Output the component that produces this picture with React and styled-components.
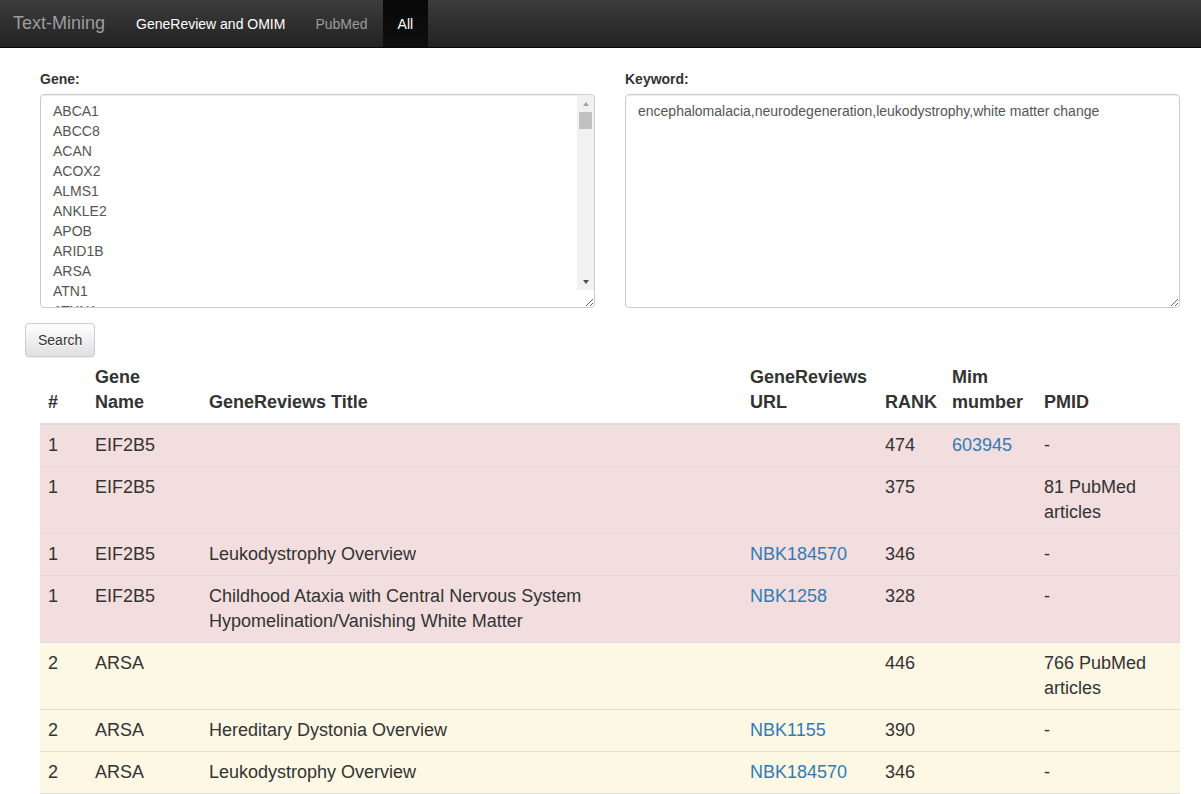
import React from "react";
import styled, { createGlobalStyle } from "styled-components";

const GlobalStyle = createGlobalStyle`
    html, body {
        margin: 0;
        padding: 0;
        background: #fff;
        font-family: "Liberation Sans", Arial, sans-serif;
        color: #333;
    }
    * {
        box-sizing: border-box;
    }
`;

const Navbar = styled.nav`
    height: 48px;
    display: flex;
    align-items: stretch;
    background: linear-gradient(to bottom, #3c3c3c 0%, #222 100%);
    border-bottom: 1px solid #080808;
`;

const Brand = styled.a`
    display: flex;
    align-items: center;
    padding: 0 16px 0 13px;
    font-size: 18px;
    color: #9d9d9d;
    text-decoration: none;
`;

const NavLink = styled.a`
    display: flex;
    align-items: center;
    padding: 0 15px;
    font-size: 14px;
    text-decoration: none;
    color: ${(p) => (p.$bright || p.$active ? "#fff" : "#9d9d9d")};
    background: ${(p) => (p.$active ? "linear-gradient(to bottom, #080808 0%, #0f0f0f 100%)" : "transparent")};
`;

const Page = styled.main`
    padding: 22px 6px 0 25px;
`;

const FormRow = styled.div`
    display: grid;
    grid-template-columns: 1fr 1fr;
    gap: 30px;
    padding: 0 15px;
`;

const FormGroup = styled.div`
    display: flex;
    flex-direction: column;
`;

const Label = styled.label`
    font-size: 14px;
    line-height: 18px;
    font-weight: bold;
    margin-bottom: 6px;
`;

const FieldBox = styled.div`
    position: relative;
`;

const TextArea = styled.textarea`
    display: block;
    height: 214px;
    width: 100%;
    padding: 6px ${(p) => (p.$scroll ? "30px" : "12px")} 6px 12px;
    font-family: "Liberation Sans", Arial, sans-serif;
    font-size: 14px;
    line-height: 20px;
    color: #555;
    border: 1px solid #ccc;
    border-radius: 4px;
    box-shadow: inset 0 1px 1px rgba(0, 0, 0, 0.075);
    overflow: hidden;
    resize: vertical;
    outline: none;
`;

/* drawn scrollbar, since the headless browser hides native ones */
const ScrollTrack = styled.div`
    position: absolute;
    top: 1px;
    right: 1px;
    bottom: 18px;
    width: 17px;
    background: #f1f1f1;
    border-top-right-radius: 3px;
    display: flex;
    flex-direction: column;
    align-items: center;
    pointer-events: none;
`;

const ScrollArrow = styled.div`
    height: 17px;
    width: 17px;
    display: flex;
    align-items: center;
    justify-content: center;

    &::before {
        content: "";
        width: 0;
        height: 0;
        border-left: 3.5px solid transparent;
        border-right: 3.5px solid transparent;
        ${(p) =>
            p.$down
                ? "border-top: 4px solid #505050;"
                : "border-bottom: 4px solid #a3a3a3;"}
    }
`;

const ScrollThumb = styled.div`
    width: 13px;
    height: 17px;
    background: #c1c1c1;
`;

const ScrollSpacer = styled.div`
    flex: 1;
`;

const SearchButton = styled.button`
    margin-top: 15px;
    height: 34px;
    padding: 0 12px;
    font-family: "Liberation Sans", Arial, sans-serif;
    font-size: 14px;
    color: #333;
    background: linear-gradient(to bottom, #fff 0%, #e0e0e0 100%);
    border: 1px solid #ccc;
    border-radius: 4px;
    box-shadow: inset 0 1px 0 rgba(255, 255, 255, 0.15), 0 1px 1px rgba(0, 0, 0, 0.075);
    text-shadow: 0 1px 0 #fff;
    cursor: pointer;
`;

const TableWrap = styled.div`
    padding: 0 15px;
`;

const Table = styled.table`
    width: 100%;
    border-collapse: collapse;
    table-layout: fixed;
    font-size: 18px;
    line-height: 25px;
`;

const Th = styled.th`
    text-align: left;
    vertical-align: bottom;
    padding: 8px;
    font-weight: bold;
    border-bottom: 2px solid #ddd;
`;

const Row = styled.tr`
    background: ${(p) => (p.$tone === "danger" ? "#f2dede" : "#fcf8e3")};
`;

const Td = styled.td`
    vertical-align: top;
    padding: 8px;
    border-top: 1px solid #ddd;
    border-bottom: 1px solid #ddd;
`;

const Link = styled.a`
    color: #337ab7;
    text-decoration: none;
`;

const genes = [
    "ABCA1", "ABCC8", "ACAN", "ACOX2", "ALMS1", "ANKLE2", "APOB", "ARID1B", "ARSA", "ATN1",
    "ATXN1", "ATXN2", "ATXN3", "ATXN7", "BCKDHA", "BCKDHB", "BRAF", "CACNA1A", "CLCN2", "COL4A1",
    "COL4A2", "CSF1R", "CTSA", "CYP27A1", "DARS", "DARS2", "DNM1L", "EARS2", "EIF2B1", "EIF2B2",
    "EIF2B3", "EIF2B4", "EIF2B5", "ERCC6", "ERCC8", "FAM126A", "FOLR1", "FUCA1", "GALC", "GFAP",
];

const columns = [47, 114, 541, 135, 67, 92, 144];

const rows = [
    { n: 1, gene: "EIF2B5", title: "", url: "", rank: 474, mim: "603945", pmid: "-", tone: "danger" },
    { n: 1, gene: "EIF2B5", title: "", url: "", rank: 375, mim: "", pmid: "81 PubMed articles", tone: "danger" },
    { n: 1, gene: "EIF2B5", title: "Leukodystrophy Overview", url: "NBK184570", rank: 346, mim: "", pmid: "-", tone: "danger" },
    { n: 1, gene: "EIF2B5", title: "Childhood Ataxia with Central Nervous System Hypomelination/Vanishing White Matter", url: "NBK1258", rank: 328, mim: "", pmid: "-", tone: "danger" },
    { n: 2, gene: "ARSA", title: "", url: "", rank: 446, mim: "", pmid: "766 PubMed articles", tone: "warning" },
    { n: 2, gene: "ARSA", title: "Hereditary Dystonia Overview", url: "NBK1155", rank: 390, mim: "", pmid: "-", tone: "warning" },
    { n: 2, gene: "ARSA", title: "Leukodystrophy Overview", url: "NBK184570", rank: 346, mim: "", pmid: "-", tone: "warning" },
];

export default function App() {
    return (
        <>
            <GlobalStyle />
            <Navbar>
                <Brand href="#">Text-Mining</Brand>
                <NavLink href="#" $bright>GeneReview and OMIM</NavLink>
                <NavLink href="#">PubMed</NavLink>
                <NavLink href="#" $active>All</NavLink>
            </Navbar>
            <Page>
                <FormRow>
                    <FormGroup>
                        <Label htmlFor="gene">Gene:</Label>
                        <FieldBox>
                            <TextArea id="gene" $scroll defaultValue={genes.join("\n")} />
                            <ScrollTrack>
                                <ScrollArrow />
                                <ScrollThumb />
                                <ScrollSpacer />
                                <ScrollArrow $down />
                            </ScrollTrack>
                        </FieldBox>
                    </FormGroup>
                    <FormGroup>
                        <Label htmlFor="keyword">Keyword:</Label>
                        <FieldBox>
                            <TextArea
                                id="keyword"
                                defaultValue="encephalomalacia,neurodegeneration,leukodystrophy,white matter change"
                            />
                        </FieldBox>
                    </FormGroup>
                </FormRow>
                <SearchButton type="button">Search</SearchButton>
                <TableWrap>
                    <Table>
                        <colgroup>
                            {columns.map((w, i) => (
                                <col key={i} style={{ width: w }} />
                            ))}
                        </colgroup>
                        <thead>
                            <tr>
                                <Th>#</Th>
                                <Th>Gene Name</Th>
                                <Th>GeneReviews Title</Th>
                                <Th>GeneReviews URL</Th>
                                <Th>RANK</Th>
                                <Th>Mim mumber</Th>
                                <Th>PMID</Th>
                            </tr>
                        </thead>
                        <tbody>
                            {rows.map((r, i) => (
                                <Row key={i} $tone={r.tone}>
                                    <Td>{r.n}</Td>
                                    <Td>{r.gene}</Td>
                                    <Td>{r.title}</Td>
                                    <Td>{r.url && <Link href="#">{r.url}</Link>}</Td>
                                    <Td>{r.rank}</Td>
                                    <Td>{r.mim && <Link href="#">{r.mim}</Link>}</Td>
                                    <Td>{r.pmid}</Td>
                                </Row>
                            ))}
                        </tbody>
                    </Table>
                </TableWrap>
            </Page>
        </>
    );
}
